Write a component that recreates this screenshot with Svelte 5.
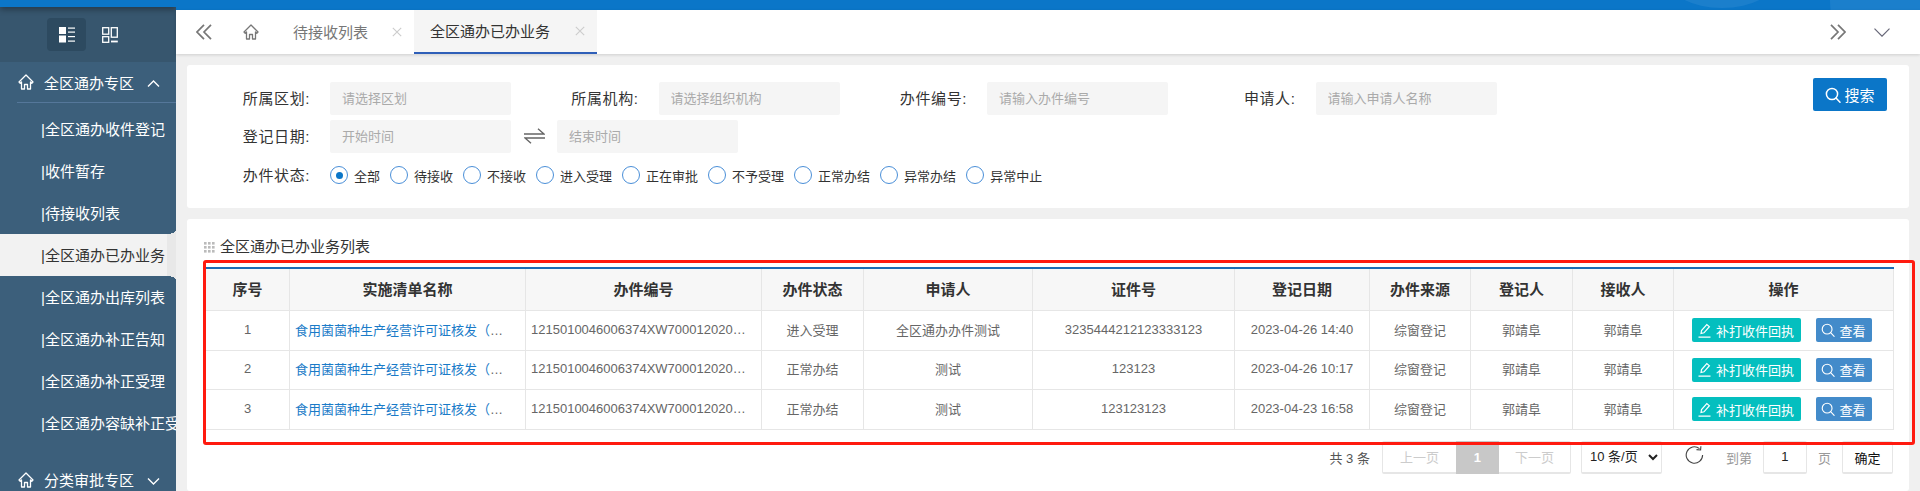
<script>
  const menu = ['全区通办收件登记', '收件暂存', '待接收列表', '全区通办已办业务', '全区通办出库列表', '全区通办补正告知', '全区通办补正受理', '全区通办容缺补正受理'];
  const activeMenu = '全区通办已办业务';
  const statuses = ['全部', '待接收', '不接收', '进入受理', '正在审批', '不予受理', '正常办结', '异常办结', '异常中止'];
  const columns = [
    ['序号', 84], ['实施清单名称', 236], ['办件编号', 236], ['办件状态', 102], ['申请人', 169],
    ['证件号', 202], ['登记日期', 135], ['办件来源', 101], ['登记人', 102], ['接收人', 101], ['操作', 220]
  ];
  const rows = [
    { n: 1, status: '进入受理', who: '全区通办办件测试', cert: '3235444212123333123', date: '2023-04-26 14:40' },
    { n: 2, status: '正常办结', who: '测试', cert: '123123', date: '2023-04-26 10:17' },
    { n: 3, status: '正常办结', who: '测试', cert: '123123123', date: '2023-04-23 16:58' }
  ];
  const itemName = '食用菌菌种生产经营许可证核发（县级权限）';
  const itemCode = '1215010046006374XW70001202004260001';
</script>

{#snippet home(size)}
  <svg class="ico" width={size} height={size} viewBox="0 0 16 16" fill="none" stroke="currentColor" stroke-width="1.3">
    <path d="M8 1 1 8l1.2 1.2L3.5 8v7h3v-4.5h3V15h3V8l1.3 1.2L15 8z" stroke-linejoin="round" />
  </svg>
{/snippet}

{#snippet search(size, w)}
  <svg class="ico" width={size} height={size} viewBox="0 0 16 16" fill="none" stroke="currentColor" stroke-width={w}>
    <circle cx="7" cy="7" r="5.6" /><path d="m11 11 4 4.2" stroke-linecap="round" />
  </svg>
{/snippet}

<div class="page">
  <aside class="sidebar">
    <div class="brandbar"></div>
    <div class="modes">
      <span class="mode on">
        <svg class="ico" width="16" height="16" viewBox="0 0 16 16" fill="#fff">
          <rect x="0" y="0" width="7" height="7" /><rect x="0" y="8.5" width="7" height="7" />
          <rect x="9" y="0.5" width="7" height="1.2" /><rect x="9" y="4.5" width="7" height="1.2" />
          <rect x="9" y="9" width="7" height="1.2" /><rect x="9" y="13.5" width="7" height="1.2" />
        </svg>
      </span>
      <span class="mode">
        <svg class="ico" width="16" height="16" viewBox="0 0 16 16" fill="none" stroke="#fff" stroke-width="1.3">
          <rect x="0.7" y="0.7" width="6" height="6.5" /><rect x="9.3" y="0.7" width="6" height="9.5" />
          <rect x="0.7" y="9.7" width="6" height="5.6" /><path d="M9 14.5h6.8" stroke-width="1.8" />
        </svg>
      </span>
    </div>
    <div class="group">
      <span class="group-ico">{@render home(16)}</span>
      <span>全区通办专区</span>
      <svg class="ico chev" width="13" height="7" viewBox="0 0 13 7" fill="none" stroke="#fff" stroke-width="1.4"><path d="m1 6.5 5.5-5.5L12 6.5" /></svg>
    </div>
    <ul class="items">
      {#each menu as m}
        <li class:active={m === activeMenu}>
          {#if m === activeMenu}<span class="fold"></span>{/if}|{m}
        </li>
      {/each}
    </ul>
    <div class="group second">
      <span class="group-ico">{@render home(16)}</span>
      <span>分类审批专区</span>
      <svg class="ico chev down" width="13" height="7" viewBox="0 0 13 7" fill="none" stroke="#fff" stroke-width="1.4"><path d="m1 .5 5.5 5.5L12 .5" /></svg>
    </div>
  </aside>

  <div class="main">
    <div class="topbar"><span class="glow one"></span><span class="glow two"></span></div>
    <nav class="tabs">
      <svg class="ico back" width="16" height="16" viewBox="0 0 16 16" fill="none" stroke="#777" stroke-width="1.7"><path d="M8 .8 1 8l7 7.2M15 .8 8 8l7 7.2" /></svg>
      <span class="tab-home">{@render home(16)}</span>
      <div class="tab">
        <span class="tab-text">待接收列表</span>
        <svg class="ico" width="10" height="10" viewBox="0 0 10 10" stroke="#ccc" stroke-width="1.1"><path d="m.8.8 8.4 8.4M9.2.8.8 9.2" /></svg>
      </div>
      <div class="tab current">
        <span class="tab-text">全区通办已办业务</span>
        <svg class="ico" width="10" height="10" viewBox="0 0 10 10" stroke="#ccc" stroke-width="1.1"><path d="m.8.8 8.4 8.4M9.2.8.8 9.2" /></svg>
      </div>
      <div class="tab-right">
        <svg class="ico" width="16" height="16" viewBox="0 0 16 16" fill="none" stroke="#777" stroke-width="1.7"><path d="m1 .8 7 7.2-7 7.2M8 .8l7 7.2-7 7.2" /></svg>
        <svg class="ico" width="16" height="9" viewBox="0 0 16 9" fill="none" stroke="#667" stroke-width="1.2"><path d="m.5.7 7.5 7.5L15.5.7" /></svg>
      </div>
    </nav>

    <div class="content">
      <section class="panel filter">
        <div class="form">
          <div class="row">
            <label class="field"><span class="lab">所属区划:</span><input placeholder="请选择区划" /></label>
            <label class="field"><span class="lab">所属机构:</span><input placeholder="请选择组织机构" /></label>
            <label class="field"><span class="lab">办件编号:</span><input placeholder="请输入办件编号" /></label>
            <label class="field"><span class="lab">申请人:</span><input placeholder="请输入申请人名称" /></label>
          </div>
          <div class="row">
            <span class="lab">登记日期:</span>
            <input placeholder="开始时间" />
            <span class="swap">
              <svg class="ico" width="21" height="16" viewBox="0 0 21 16" fill="none" stroke="#666" stroke-width="1.4">
                <path d="M0 6h20L14 .8M21 10H1l6 5.2" />
              </svg>
            </span>
            <input placeholder="结束时间" />
          </div>
          <div class="row radios">
            <span class="lab">办件状态:</span>
            <div class="radio-list">
              {#each statuses as s, i}
                <span class="radio"><span class="dot" class:checked={i === 0}></span>{s}</span>
              {/each}
            </div>
          </div>
        </div>
        <button class="search-btn">{@render search(16, 1.5)}<span>搜索</span></button>
      </section>

      <section class="panel list">
        <h2>
          <svg class="ico" width="11" height="11" viewBox="0 0 11 11" fill="#bbb">
            {#each [0, 4, 8] as y}{#each [0, 4, 8] as x}<rect {x} {y} width="2.6" height="2.6" />{/each}{/each}
          </svg>
          全区通办已办业务列表
        </h2>
        <table>
          <colgroup>{#each columns as c}<col style="width:{c[1]}px" />{/each}</colgroup>
          <thead><tr>{#each columns as c}<th>{c[0]}</th>{/each}</tr></thead>
          <tbody>
            {#each rows as r}
              <tr>
                <td>{r.n}</td>
                <td class="clip"><a href="#item">{itemName}</a></td>
                <td class="clip">{itemCode}</td>
                <td>{r.status}</td>
                <td>{r.who}</td>
                <td>{r.cert}</td>
                <td>{r.date}</td>
                <td>综窗登记</td>
                <td>郭靖阜</td>
                <td>郭靖阜</td>
                <td class="op-cell">
                  <div class="ops">
                    <button class="op teal">
                      <svg class="ico" width="13" height="15" viewBox="0 0 13 15" fill="none" stroke="#fff" stroke-width="1.2">
                        <path d="M3 10.5 3.5 7.5 8.8 1.5l2.6 2.2L6 9.8zM.5 14.2h12" />
                      </svg>
                      补打收件回执
                    </button>
                    <button class="op blue">{@render search(14, 1.3)}查看</button>
                  </div>
                </td>
              </tr>
            {/each}
          </tbody>
        </table>
        <div class="pager">
          <span class="total">共 3 条</span>
          <div class="pages"><span class="pg prev">上一页</span><span class="pg now">1</span><span class="pg next">下一页</span></div>
          <select class="size"><option>10 条/页</option><option>20 条/页</option></select>
          <svg class="ico refresh" width="19" height="19" viewBox="0 0 19 19" fill="none" stroke="#444" stroke-width="1.1">
            <path d="M14.5 2.6A8.2 8.2 0 1 0 17.6 9" /><path d="M11.5 3.6 15.6 4l.3-3.8" />
          </svg>
          <span class="muted goto">到第</span>
          <input class="page-input" value="1" />
          <span class="muted ye">页</span>
          <button class="ok">确定</button>
        </div>
        <div class="mark"></div>
      </section>
    </div>
  </div>
</div>

<style>
  :global(html), :global(body) { margin: 0; height: 491px; overflow: hidden; background: #f0f0f0; }
  * { box-sizing: border-box; }
  .page {
    display: flex; height: 491px; overflow: hidden;
    font-family: "Liberation Sans", "Noto Sans CJK SC", sans-serif;
    font-size: 13px; color: #333;
  }
  .ico { display: block; flex: none; }

  /* sidebar */
  .sidebar { width: 176px; flex: none; height: 491px; overflow: hidden; background: #3c5f7b; color: #fff; font-size: 15px; }
  .brandbar { height: 7px; background: #0b76c8; box-shadow: 0 2px 6px rgba(0, 0, 0, .4); position: relative; }
  .modes { height: 55px; background: #37566e; display: flex; align-items: center; padding-left: 47px; }
  .mode { width: 39px; height: 33px; border-radius: 4px; display: flex; align-items: center; justify-content: center; }
  .mode.on { background: #2d4a60; }
  .mode + .mode { margin-left: 16px; width: 16px; }
  .group { height: 41px; margin-left: 17px; display: flex; align-items: center; border-bottom: 1px solid #55779a; white-space: nowrap; }
  .group-ico { margin-left: 1px; margin-right: 10px; }
  .chev { margin-left: 13px; margin-top: 2px; }
  .chev.down { margin-top: 3px; }
  .group.second { border-bottom: 0; margin-top: 15px; }
  .items { list-style: none; margin: 5px 0 0; padding: 0; }
  .items li { height: 42px; line-height: 44px; padding-left: 41px; white-space: nowrap; overflow: hidden; position: relative; }
  .items li.active { background: #f2f2f2; color: #333; overflow: visible; }
  .fold { position: absolute; right: 0; top: 0; bottom: 0; width: 9px; background: #e8e8e8; }
  .fold::before, .fold::after { content: ""; position: absolute; right: 0; width: 9px; height: 4px; }
  .fold::before { top: -4px; background: radial-gradient(ellipse 100% 100% at 0 0, #3c5f7b 96%, #e8e8e8 100%); }
  .fold::after { bottom: -4px; background: radial-gradient(ellipse 100% 100% at 0 100%, #3c5f7b 96%, #e8e8e8 100%); }

  /* top */
  .main { flex: 1; min-width: 0; display: flex; flex-direction: column; }
  .topbar { height: 10px; background: #0b76c8; position: relative; overflow: hidden; flex: none; }
  .glow { position: absolute; background: #1b7fcc; border-radius: 50%; }
  .glow.one { left: 1491px; width: 110px; height: 60px; top: -52px; }
  .glow.two { left: 1654px; width: 200px; height: 200px; top: -100px; }
  .tabs { height: 44px; flex: none; background: #fff; display: flex; align-items: center; padding-left: 20px; color: #777; font-size: 15px; box-shadow: 0 1px 3px rgba(0, 0, 0, .14); position: relative; }
  .tab-home { margin-left: 31px; margin-right: 18px; color: #777; }
  .tab { height: 44px; display: flex; align-items: center; padding: 0 12px 0 16px; gap: 24px; white-space: nowrap; }
  .tab-text { padding-bottom: 2px; }
  .tab.current { background: #f5f5f5; color: #333; border-bottom: 2px solid #2f5fb8; gap: 25px; }
  .tab-right { margin-left: auto; display: flex; align-items: center; gap: 28px; padding-right: 30px; }

  .content { flex: 1; min-height: 0; background: #f0f0f0; padding: 11px 11px 0; display: flex; flex-direction: column; gap: 11px; }
  .panel { background: #fff; border-radius: 3px; }

  /* filter */
  .filter { height: 143px; flex: none; display: flex; justify-content: space-between; padding: 17px 22px 0 0; }
  .row { display: flex; align-items: center; height: 33px; margin-bottom: 5px; }
  .field { display: flex; align-items: center; width: 328.5px; }
  .lab { width: 123px; margin-right: 20px; padding-bottom: 2px; text-align: right; font-size: 15px; letter-spacing: .6px; white-space: nowrap; color: #333; flex: none; }
  input { font-family: inherit; }
  .row input { width: 181px; height: 33px; border: 0; border-radius: 2px; background: #f5f5f5; padding: 0 12px; font-size: 13px; color: #333; outline: 0; flex: none; }
  .row input::placeholder { color: #aaa; opacity: 1; }
  .swap { width: 46px; display: flex; justify-content: center; margin-top: -2px; }
  .radios { height: 34px; }
  .radio-list { display: flex; align-items: center; gap: 10px; }
  .radio { display: flex; align-items: center; gap: 6px; font-size: 13px; white-space: nowrap; color: #333; }
  .dot { width: 18px; height: 18px; border: 1.5px solid #4a8fd8; border-radius: 50%; position: relative; flex: none; }
  .dot.checked::after { content: ""; position: absolute; left: 50%; top: 50%; width: 7px; height: 7px; margin: -3.5px; border-radius: 50%; background: #0b76c8; }
  .search-btn { width: 74px; height: 33px; margin-top: -4px; border: 0; border-radius: 2px; background: #0b76c8; color: #fff; font: 15px "Liberation Sans", "Noto Sans CJK SC", sans-serif; display: flex; align-items: center; justify-content: center; gap: 3px; padding: 0; flex: none; }

  /* list */
  .list { flex: 1; padding: 0 16px 0 18px; position: relative; min-height: 0; }
  h2 { margin: 0 0 0 -1px; height: 48px; padding-top: 8px; display: flex; align-items: center; gap: 5px; font-size: 15px; font-weight: 400; color: #333; line-height: 20px; }
  table { width: 1688px; table-layout: fixed; border-collapse: collapse; border-top: 2px solid #1c6cb4; font-size: 13px; color: #666; }
  th, td { border: 1px solid #e6e6e6; text-align: center; padding: 0 0 2px; }
  th { height: 42px; background: #f7f7f7; color: #333; font-size: 15px; font-weight: 700; }
  td { height: 40px; }
  tbody tr:nth-child(2) td { height: 39px; }
  td.clip { text-align: left; padding: 0 14px 2px 5px; white-space: nowrap; overflow: hidden; text-overflow: ellipsis; }
  td.op-cell { padding: 0 4px 0 0; }
  a { color: #1a7bc8; text-decoration: none; }
  .ops { display: flex; justify-content: center; gap: 15px; }
  .op { height: 24px; border: 0; border-radius: 2px; color: #fff; font: 13px "Liberation Sans", "Noto Sans CJK SC", sans-serif; display: flex; align-items: center; justify-content: center; padding: 0; gap: 5px; }
  .teal { width: 109px; background: #04bfbf; }
  .blue { width: 56px; background: #438bca; gap: 4px; }

  .pager { display: flex; justify-content: flex-end; align-items: center; margin-top: 11px; height: 33px; font-size: 13px; color: #555; }
  .total { margin-right: 12px; white-space: nowrap; }
  .pages { display: flex; width: 189px; height: 33px; border: 1px solid #e6e6e6; border-bottom-width: 2px; border-radius: 2px; margin-right: 10px; }
  .pg { display: flex; align-items: center; justify-content: center; color: #ccc; white-space: nowrap; }
  .prev { width: 73px; } .next { flex: 1; }
  .now { width: 43px; background: #c8c8c8; color: #fff; font-weight: 700; margin: -1px 0 -2px; }
  .size { width: 81px; height: 33px; border: 1px solid #e6e6e6; border-bottom-width: 2px; border-radius: 2px; background: #fff; font: 13px "Liberation Sans", "Noto Sans CJK SC", sans-serif; color: #222; padding: 0 0 0 4px; margin-right: 23px; outline: 0; }
  .refresh { margin-right: 22px; margin-top: -3px; }
  .muted { color: #999; white-space: nowrap; }
  .goto { margin-right: 11px; }
  .page-input { width: 44px; height: 33px; border: 1px solid #e6e6e6; border-bottom-width: 2px; border-radius: 2px; text-align: center; font-size: 13px; color: #222; outline: 0; padding: 0; margin-right: 11px; }
  .ye { margin-right: 11px; }
  .ok { width: 51px; height: 33px; border: 1px solid #e6e6e6; border-bottom-width: 2px; border-radius: 2px; background: #fff; color: #111; font: 13px "Liberation Sans", "Noto Sans CJK SC", sans-serif; padding: 1px 0 0; }

  .mark { position: absolute; left: 16px; top: 41px; width: 1712px; height: 185px; border: 3px solid #ff1a0f; border-radius: 3px; pointer-events: none; }
</style>
